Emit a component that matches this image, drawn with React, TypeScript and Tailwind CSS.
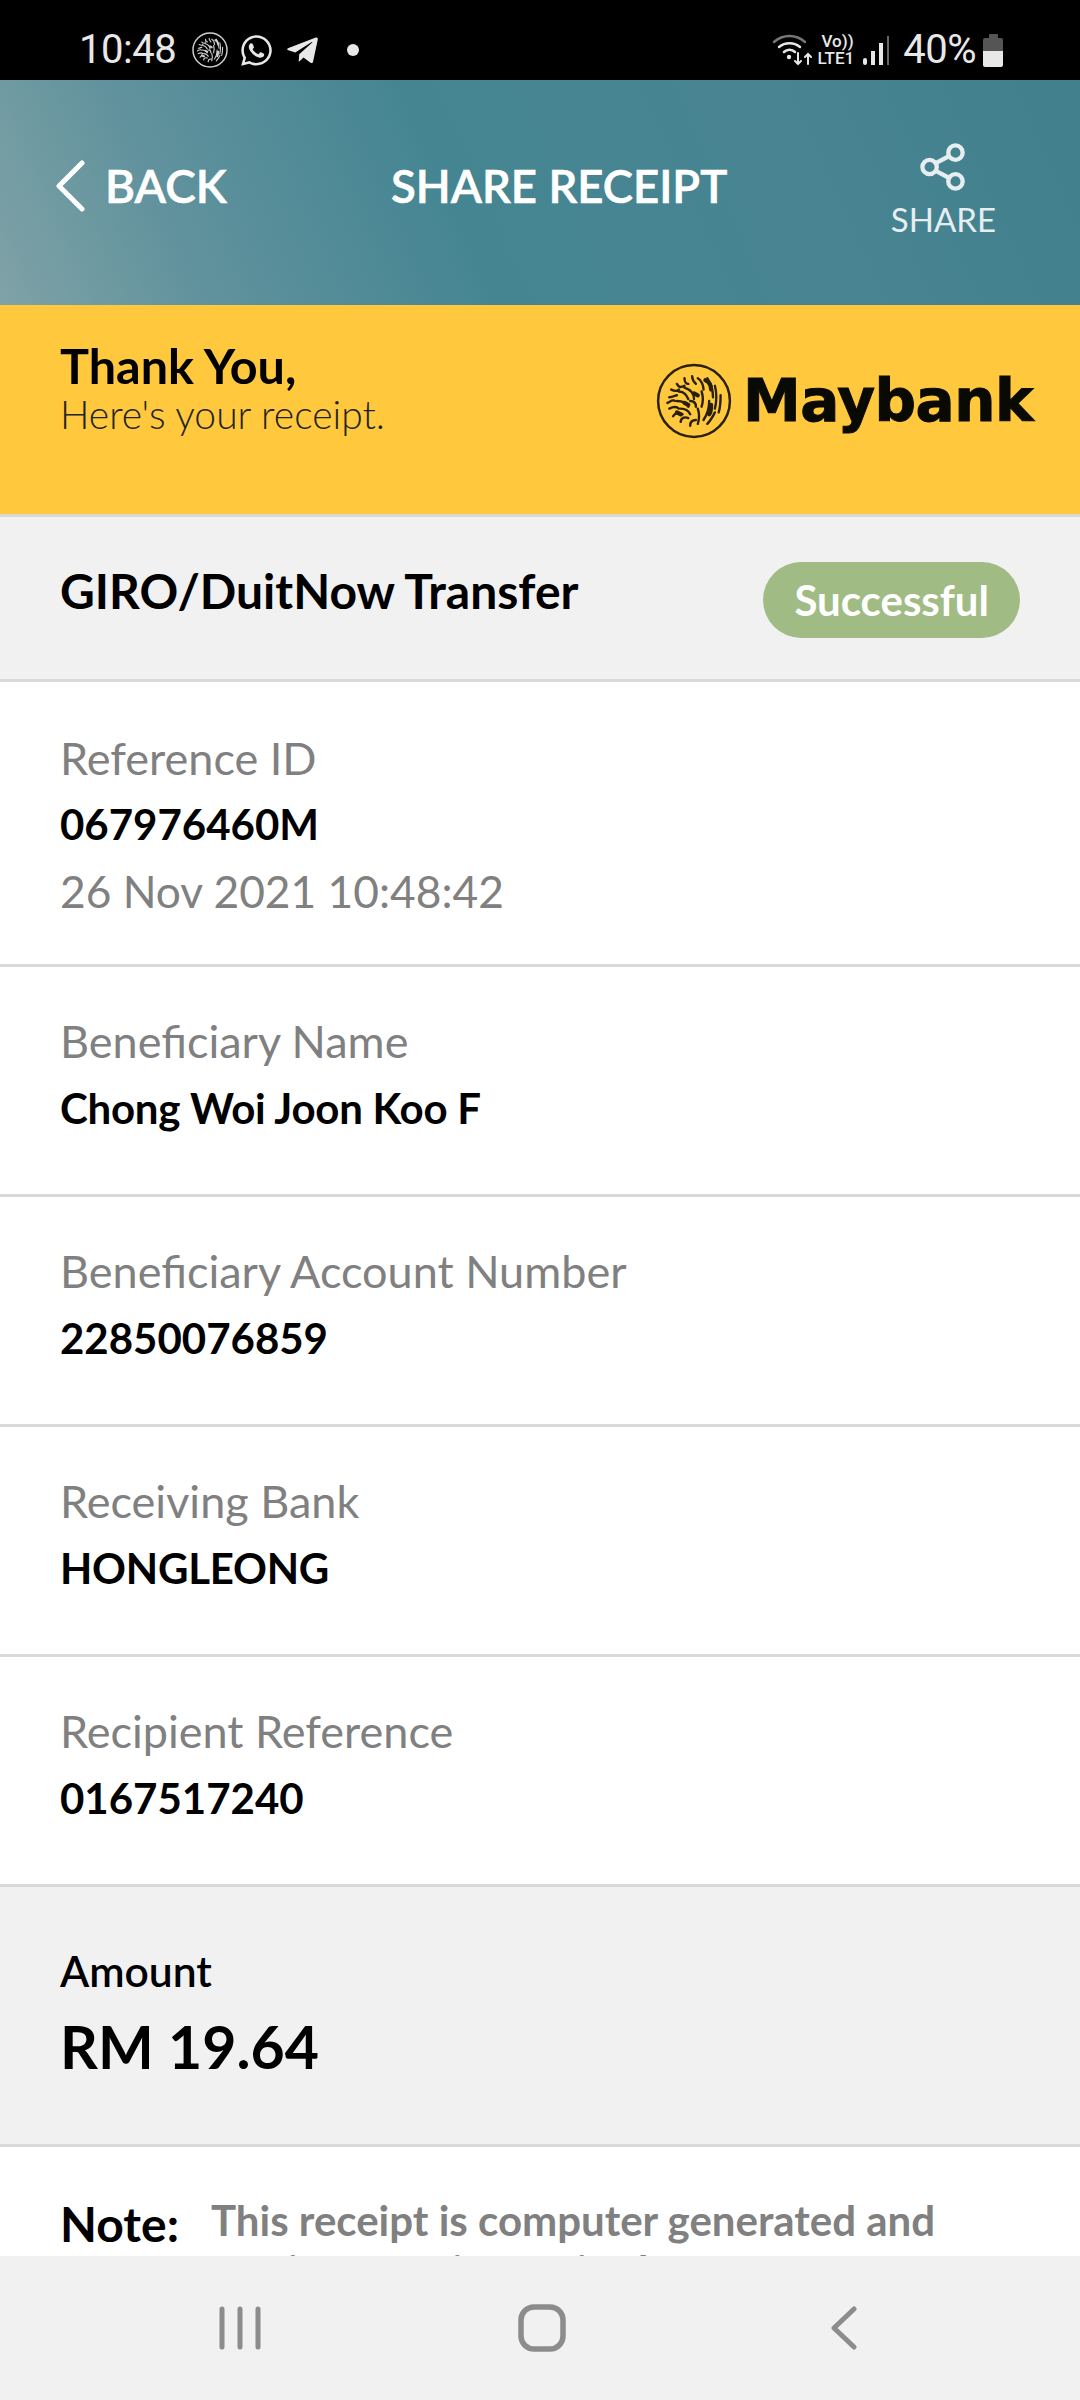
import { FaWhatsapp, FaTelegramPlane } from "react-icons/fa";

const lato = "font-['Lato','Liberation_Sans',sans-serif]";

const rows = [
  { label: "Beneficiary Name", value: "Chong Woi Joon Koo F", tight: true },
  { label: "Beneficiary Account Number", value: "22850076859", tight: false },
  { label: "Receiving Bank", value: "HONGLEONG", tight: true },
  { label: "Recipient Reference", value: "0167517240", tight: false },
];

// the tiger head in the Maybank roundel, as a tangle of short strokes
const TigerBadge = ({ size, color, ring }: { size: number; color: string; ring: number }) => (
  <svg width={size} height={size} viewBox="0 0 40 40" fill="none" stroke={color} strokeLinecap="round">
    <circle cx="20" cy="20" r="18.9" strokeWidth={ring} />
    <path
      strokeWidth="1.25"
      d="M6 21c2-1 3-2 4-1M7 18c2 0 3-1 4-1M8 14c2 1 3 1 4 0M11 11c1 2 2 2 4 1M15 8c0 2 1 3 2 3M19 7c0 2 1 3 2 4M7 24c2-1 4-1 5 0M9 28c1-2 3-2 5-1M13 31c0-2 2-3 4-2M18 33c0-2 1-3 3-3M12 15c3 0 4 2 5 4M15 13c3 1 5 3 5 6M11 20c3 0 5 1 6 3M13 24c2 0 4 1 5 3M22 8c2 1 3 4 3 6M24 15c1 3 1 5 0 8M27 8c2 3 3 6 3 10M31 12c1 4 1 8 0 12M34 17c0 3 0 6-1 9M28 20c0 4-1 7-3 10M31 26c-1 2-2 4-4 6M22 24c1 3 1 5 0 8M18 20c2 0 3 1 3 3"
    />
    <path strokeWidth="2.2" d="M26 9c2 1 3 3 3 5M20 16l2 1M15 21l2 1M29 22c0 2 0 4-1 5M11 26l2 1" />
  </svg>
);

const StatusBar = () => (
  <div className="flex h-[80px] items-center justify-between bg-black pl-[79px] pr-[77px] pt-[20px] text-[#e8e8e8]">
    <div className="flex items-center">
      <span className="font-['Roboto',sans-serif] text-[40px] leading-none tracking-[-0.5px]">10:48</span>
      <span className="ml-[16px] flex"><TigerBadge size={36} color="#cfcfcf" ring={1.6} /></span>
      <FaWhatsapp className="ml-[11px] text-[35px]" />
      <FaTelegramPlane className="ml-[11px] text-[35px]" />
      <span className="ml-[27px] size-[12px] rounded-full bg-[#e8e8e8]" />
    </div>
    <div className="flex items-center">
      <svg width="40" height="34" viewBox="0 0 40 34" fill="none" strokeLinecap="round">
        <path d="M2 9C11 1 24 1 33 9" stroke="#777" strokeWidth="2.5" />
        <path d="M7 14c6-5 15-5 21 0" stroke="#e8e8e8" strokeWidth="2.5" />
        <path d="M12 19c3-3 8-3 11 0" stroke="#e8e8e8" strokeWidth="2.5" />
        <circle cx="17" cy="24" r="2.2" fill="#e8e8e8" />
        <path d="M26 20v11M23 28l3 3 3-3M36 31V21M33 24l3-3 3 3" stroke="#e8e8e8" strokeWidth="2" />
      </svg>
      <div className="ml-[5px] flex flex-col items-start font-['Roboto',sans-serif] text-[17px] font-medium leading-[17px]">
        <span className="ml-[4px]">Vo))</span>
        <span>LTE1</span>
      </div>
      <svg className="ml-[9px]" width="26" height="32" viewBox="0 0 26 32">
        <rect x="0" y="24" width="4" height="7" rx="2" fill="#e8e8e8" />
        <rect x="8" y="17" width="4" height="14" fill="#e8e8e8" />
        <rect x="16" y="9" width="4" height="22" fill="#e8e8e8" />
        <rect x="24" y="2" width="2" height="29" fill="#666" />
      </svg>
      <span className="ml-[14px] font-['Roboto',sans-serif] text-[40px] leading-none tracking-[-0.5px]">40%</span>
      <div className="ml-[7px] flex h-[33px] w-[20px] flex-col items-center">
        <div className="h-[4px] w-[9px] rounded-t-[1px] bg-[#555]" />
        <div className="h-[13px] w-full rounded-t-[2px] bg-[#555]" />
        <div className="h-[16px] w-full rounded-b-[2px] bg-[#e8e8e8]" />
      </div>
    </div>
  </div>
);

const Header = () => (
  <div className="flex h-[225px] items-center bg-[linear-gradient(66deg,#7fa2a6_0%,#60929d_18%,#458592_42%,#488491_72%,#42808e_100%)] pb-[14px] text-white">
    <div className="flex w-[391px] items-center pl-[55px]">
      <svg width="30" height="52" viewBox="0 0 30 52" fill="none" stroke="white" strokeWidth="5" strokeLinecap="round" strokeLinejoin="round">
        <path d="M27 3 4 26l23 23" />
      </svg>
      <span className="ml-[20px] text-[46px] font-semibold leading-none [-webkit-text-stroke:0.6px_white]">BACK</span>
    </div>
    <span className="text-[45.5px] font-semibold leading-none [-webkit-text-stroke:0.6px_white]">SHARE RECEIPT</span>
    <div className="ml-auto mr-[84px] mt-[8px] flex flex-col items-center text-[#e6eef0]">
      <svg width="46" height="48" viewBox="0 0 48 50" fill="none" stroke="currentColor" strokeWidth="4.5">
        <circle cx="37" cy="10" r="7.5" />
        <circle cx="10" cy="25" r="7.5" />
        <circle cx="37" cy="40" r="7.5" />
        <path d="m16.5 21 14-7.5M16.5 29l14 7.5" />
      </svg>
      <span className="mt-[12px] text-[33px] leading-none">SHARE</span>
    </div>
  </div>
);

export default function App() {
  return (
    <div className={`flex h-[2400px] w-[1080px] flex-col overflow-hidden bg-white ${lato}`}>
      <StatusBar />
      <Header />

      <div className="min-h-0 flex-1 overflow-hidden">
        <div className="flex h-[212px] items-center justify-between border-b-[3px] border-[#d9d9d3] bg-[#ffc83d] pl-[60px] pr-[47px]">
          <div className="pb-[46px]">
            <p className="text-[48.5px] font-bold leading-[54px] text-black">Thank You,</p>
            <p className="text-[39px] font-light leading-[44px] text-[#222]">Here's your receipt.</p>
          </div>
          <div className="mb-[18px] flex items-center blur-[0.6px]">
            <TigerBadge size={76} color="#2a2006" ring={1.3} />
            <span className="ml-[11px] font-['DejaVu_Sans',sans-serif] text-[58px] font-bold leading-none tracking-[-0.5px] text-[#0a0a05] [-webkit-text-stroke:1px_#0a0a05]">
              Maybank
            </span>
          </div>
        </div>

        <div className="flex h-[165px] items-center justify-between border-b-[3px] border-[#d9d9d9] bg-[#f1f1f1] pl-[60px] pr-[60px]">
          <span className="mb-[14px] text-[48px] font-bold leading-none text-black">GIRO/DuitNow Transfer</span>
          <span className="mt-[3px] rounded-full bg-[#a0bc84] px-[31px] py-[17px] text-[42px] font-bold leading-none text-white">
            Successful
          </span>
        </div>

        <div className="h-[285px] border-b-[3px] border-[#d9d9d9] px-[60px] pt-[43px]">
          <p className="text-[45px] leading-[66px] text-[#808080]">Reference ID</p>
          <p className="text-[42px] font-bold leading-[66px] text-black">067976460M</p>
          <p className="text-[44.3px] leading-[67px] text-[#808080]">26 Nov 2021 10:48:42</p>
        </div>

        {rows.map((row) => (
          <div key={row.label} className="h-[230px] border-b-[3px] border-[#d9d9d9] px-[60px] pt-[41px]">
            <p className="text-[45px] leading-[66px] text-[#808080]">{row.label}</p>
            <p className={`text-[42px] font-bold leading-[68px] text-black ${row.tight ? "tracking-[-0.25px]" : ""}`}>
              {row.value}
            </p>
          </div>
        ))}

        <div className="h-[260px] border-b-[3px] border-[#d9d9d9] bg-[#f1f1f1] px-[60px] pt-[57px]">
          <p className="text-[42.6px] font-semibold leading-[54px] text-black">Amount</p>
          <p className="mt-[13px] text-[59px] font-bold leading-[72px] text-black">RM 19.64</p>
        </div>

        <div className="flex px-[60px] pt-[44px]">
          <span className="w-[151px] shrink-0 pt-[2px] text-[48px] font-bold leading-[62px] text-black">Note:</span>
          <p className="w-[745px] pt-[4px] text-[42px] font-bold leading-[50px] text-[#808080]">
            This receipt is computer generated and no signature is required.
          </p>
        </div>
      </div>

      <div className="flex h-[144px] items-center bg-[#f1f1f1] pl-[89px]">
        <div className="flex w-[302px] justify-center">
          <svg width="42" height="44" viewBox="0 0 42 44" stroke="#8c8c8c" strokeWidth="5" strokeLinecap="round">
            <path d="M3 3v38M21 3v38M39 3v38" />
          </svg>
        </div>
        <div className="flex w-[302px] justify-center">
          <svg width="48" height="48" viewBox="0 0 48 48" fill="none" stroke="#8c8c8c" strokeWidth="5.5">
            <rect x="3" y="3" width="42" height="42" rx="13" />
          </svg>
        </div>
        <div className="flex w-[302px] justify-center">
          <svg width="26" height="44" viewBox="0 0 26 44" fill="none" stroke="#8c8c8c" strokeWidth="5" strokeLinecap="round" strokeLinejoin="round">
            <path d="M23 3 3 22l20 19" />
          </svg>
        </div>
      </div>
    </div>
  );
}
